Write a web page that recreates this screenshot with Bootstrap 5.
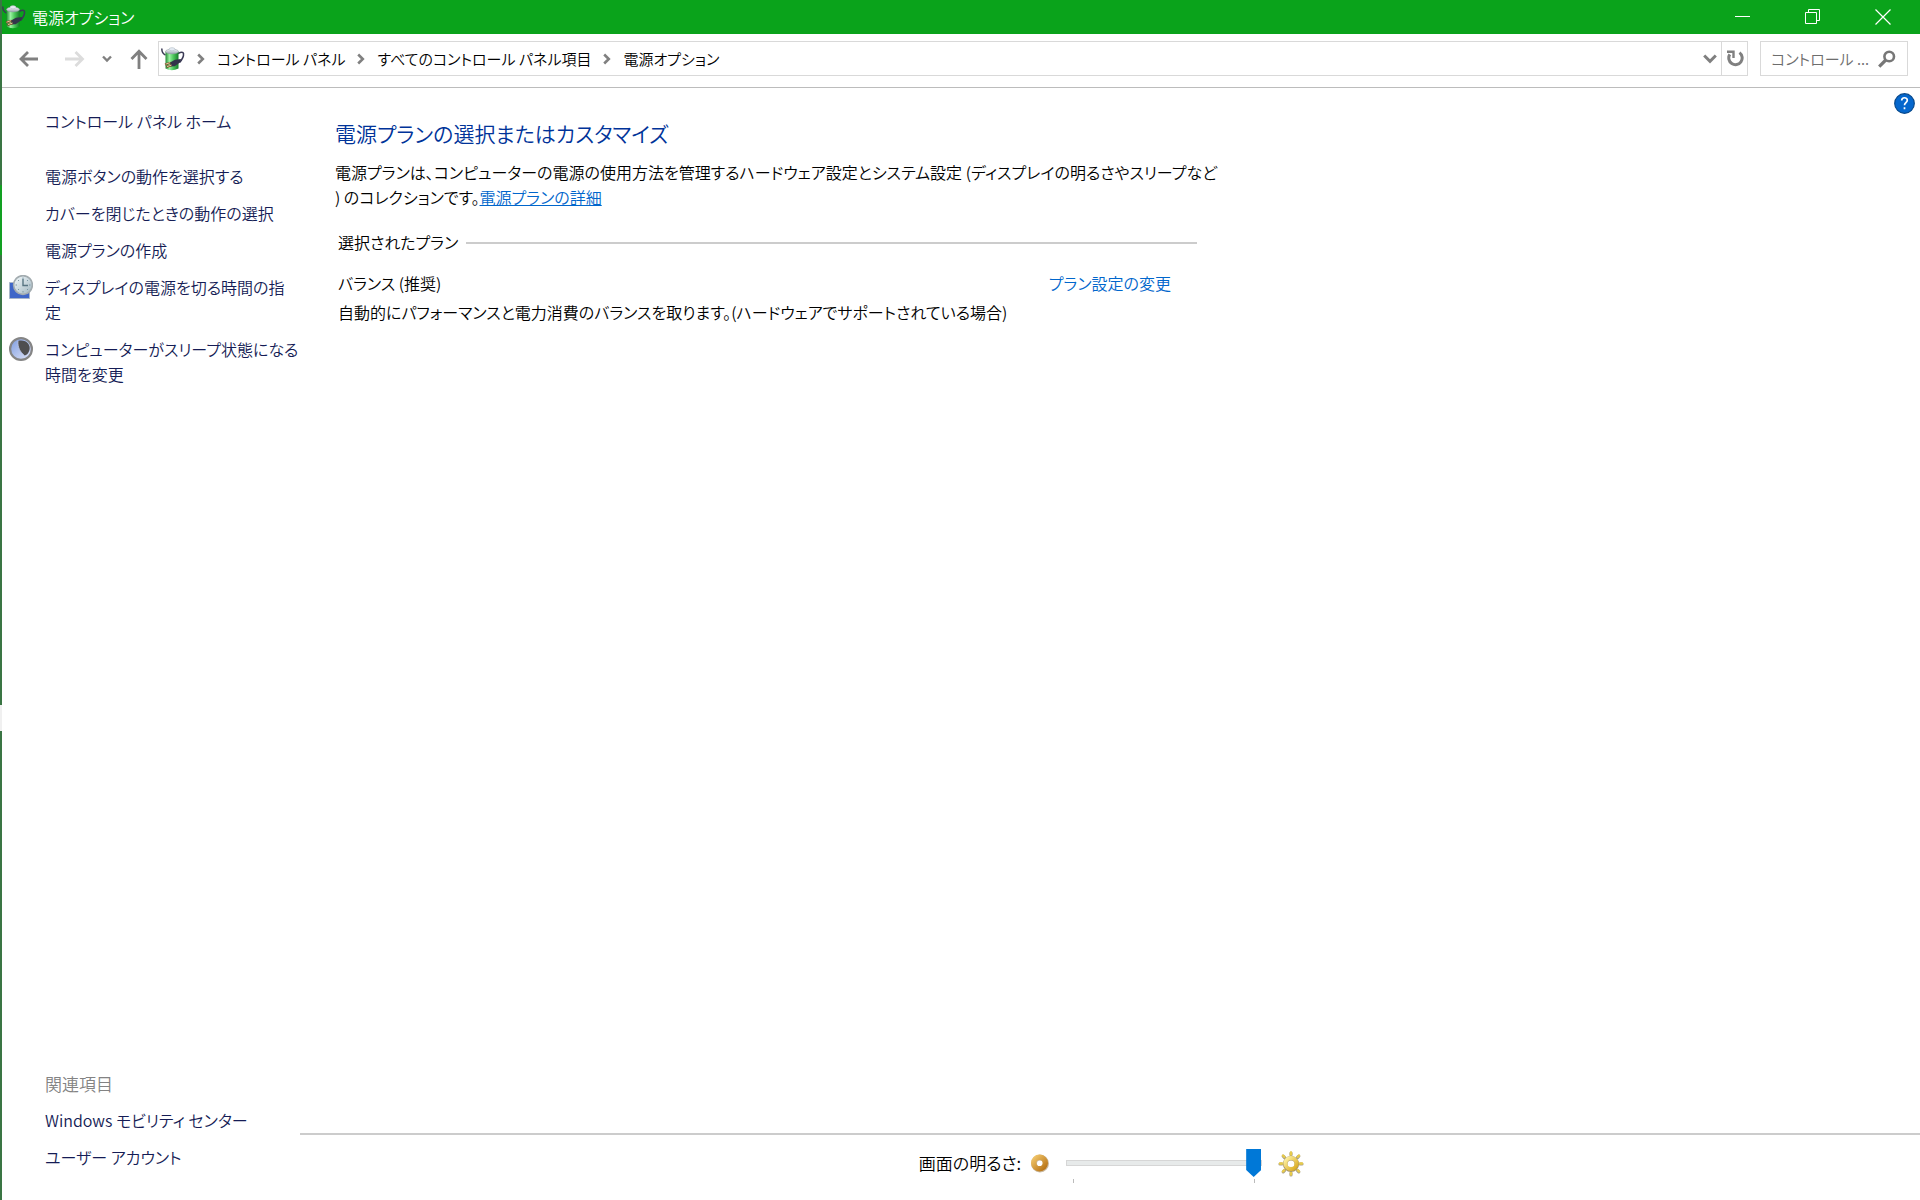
<!DOCTYPE html>
<html lang="ja">
<head>
<meta charset="utf-8">
<meta name="viewport" content="width=device-width, initial-scale=1">
<title>電源オプション</title>
<link href="https://cdn.jsdelivr.net/npm/bootstrap@5.3.0/dist/css/bootstrap.min.css" rel="stylesheet">
<style>
  body { font-family: "Noto Sans CJK JP", sans-serif; font-feature-settings: "palt"; font-weight: 350; font-size: 16px; line-height: 25px; color: #000; background: #fff; }
  a { text-decoration: none; color: #0066cc; }
  button { background: none; border: 0; padding: 0; color: inherit; }
  svg { display: block; flex: none; }
  .desk { width: 2px; background: #3a7544; }
  .desk-top { height: 185px; }
  .desk-lit { height: 70px; background: #12a022; }
  .desk-mid { height: 450px; }
  .desk-gap { height: 26px; background: #f0f0f0; }
  .titlebar { height: 34px; background: #0aa31b; color: #fff; padding-right: 2px; }
  .titlebar button { width: 70px; height: 34px; }
  .app-name { margin-left: 6px; }
  .navbar-strip { height: 54px; padding: 7px 12px 11px 0; border-bottom: 1px solid #bcbcbc; color: #808080; font-size: 15px; }
  .nav-keys { width: 156px; padding: 0 10px 0 17px; }
  .address { border: 1px solid #d9d9d9; height: 35px; color: #000; padding-left: 2px; }
  .address a { color: #000; }
  .crumb-sep { margin: 0 12px; }
  .refresh { width: 26px; height: 33px; border-left: 1px solid #d9d9d9; }
  .search { width: 148px; height: 35px; border: 1px solid #d9d9d9; margin-left: 12px; padding: 0 11px 0 10px; }
  .search input { border: 0; outline: 0; width: 100px; padding: 0; background: none; color: #6d6d6d; font-weight: 350; font-feature-settings: "palt"; }
  .search input::placeholder { color: #6d6d6d; opacity: 1; }
  .side { width: 298px; padding: 21px 0 30px 7px; }
  .side a { color: #151c55; }
  .side li { display: flex; gap: 12px; padding-left: 36px; }
  .side li.pictured { padding-left: 0; }
  .tasks { display: flex; flex-direction: column; gap: 12px; }
  .main-tasks { margin-top: 30px; }
  .side .related { color: #838383; font-size: 17px; }
  .plans { padding: 28px 0 0 35px; width: 920px; }
  .plans h1 { font-size: 21px; line-height: 34px; font-weight: 350; color: #003399; margin-bottom: 10px; }
  .rule { height: 2px; background: #ccc; }
  .group { padding-left: 3px; width: 862px; }
  .group h2 { font-size: 16px; line-height: 25px; font-weight: 350; margin: 0; }
  .change { margin-right: 26px; }
  .bright { padding: 14px 0 17px 3px; gap: 10px; line-height: 28px; font-size: 17px; }
  .level { width: 196px; margin: 0 6px 0 7px; }
  .level input { appearance: none; -webkit-appearance: none; width: 100%; height: 28px; margin: 0; display: block; background: none; }
  .level input::-webkit-slider-runnable-track { height: 6px; background: #e7eaea; border: 1px solid #d6d6d6; }
  .level input::-webkit-slider-thumb { -webkit-appearance: none; width: 15px; height: 28px; margin-top: -12px; background: #0078d7; clip-path: polygon(0 0, 100% 0, 100% 75%, 50% 100%, 0 75%); }
  .ticks { padding: 2px 7px 0; }
  .ticks span { width: 1px; height: 4px; background: #bbb; }
  .help { margin: 5px 5px 0 auto; height: 21px; }
</style>
<script src="https://cdn.jsdelivr.net/npm/bootstrap@5.3.0/dist/js/bootstrap.bundle.min.js"></script>
</head>
<body>
<svg width="0" height="0" class="position-absolute" aria-hidden="true">
  <defs>
    <linearGradient id="cell"><stop offset="0" stop-color="#238a35"/><stop offset=".3" stop-color="#9af2a2"/><stop offset=".6" stop-color="#4fc95c"/><stop offset="1" stop-color="#177c29"/></linearGradient>
    <linearGradient id="cap" x2="0" y2="1"><stop offset="0" stop-color="#f5f7fa"/><stop offset="1" stop-color="#98a3ad"/></linearGradient>
    <linearGradient id="steel" x2="1" y2="1"><stop offset="0" stop-color="#f6fbfd"/><stop offset="1" stop-color="#9fb5bf"/></linearGradient>
    <linearGradient id="gold" x2="1" y2="1"><stop offset="0" stop-color="#f0c468"/><stop offset="1" stop-color="#b87316"/></linearGradient>
    <linearGradient id="sun" x2="1" y2="1"><stop offset="0" stop-color="#fff3a6"/><stop offset="1" stop-color="#d8a81c"/></linearGradient>
    <linearGradient id="night" x2="1" y2="1"><stop offset="0" stop-color="#7c9be0"/><stop offset="1" stop-color="#e2e6f8"/></linearGradient>
    <symbol id="battery" viewBox="0 0 24 24">
      <path d="M.8 1.500q0 5 3.700 6.500M17 6.500q5-2.500 5.500 0 .5 4-4 9" fill="none" stroke="#3b3a56" stroke-width="1.500"/>
      <path d="M4.500 4.500v17q6 3.500 13 0v-17z" fill="url(#cell)"/>
      <ellipse cx="11" cy="4.500" rx="6.500" ry="2.400" fill="url(#cap)" stroke="#8f999f" stroke-width=".5"/>
      <ellipse cx="11" cy="2.200" rx="3" ry="1.600" fill="#e3eaf2" stroke="#a0abb5" stroke-width=".4"/>
      <path d="M9 15.500l5-2.800 6-.7-.8 3.200-5.500 4-4 .3z" fill="#33344a"/>
      <path d="M4 17.500l5.500-1.800M5.500 20l5-1.800" stroke="#6d4a22" stroke-width="2"/>
      <path d="M4.500 17.200l4.500-1.500M6 19.600l4.500-1.500" stroke="#e6c69a" stroke-width="1"/>
    </symbol>
    <symbol id="crumb" viewBox="0 0 8 12"><path d="M1.200 1.500L5.800 6l-4.600 4.500" fill="none" stroke="#808080" stroke-width="2.600"/></symbol>
  </defs>
</svg>
<div class="d-flex min-vh-100">
  <div class="desk" aria-hidden="true">
    <div class="desk-top"></div><div class="desk-lit"></div><div class="desk-mid"></div><div class="desk-gap"></div>
  </div>
  <div class="d-flex flex-column flex-grow-1">
    <header class="titlebar d-flex align-items-center">
      <svg width="24" height="24"><use href="#battery"/></svg>
      <span class="app-name flex-grow-1">電源オプション</span>
      <button type="button" aria-label="最小化"><svg class="mx-auto" width="16" height="16"><path d="M0 7.500h15" stroke="#fff"/></svg></button>
      <button type="button" aria-label="元に戻す"><svg class="mx-auto" width="16" height="16" fill="none" stroke="#fff"><path d="M.5 3.500h11v11H.5zM3.500 3.500v-3h11v11h-3"/></svg></button>
      <button type="button" aria-label="閉じる"><svg class="mx-auto" width="16" height="16"><path d="M.5.5l15 15M15.500.5l-15 15" stroke="#fff" stroke-width="1.200"/></svg></button>
    </header>
    <nav class="navbar-strip d-flex align-items-center" aria-label="アドレス">
      <div class="nav-keys d-flex align-items-center justify-content-between">
        <button type="button" aria-label="戻る"><svg width="20" height="16" fill="none" stroke="#808080" stroke-width="2.800"><path d="M19 8H2M9 1L2 8l7 7"/></svg></button>
        <button type="button" aria-label="進む" class="ms-2"><svg width="20" height="16" fill="none" stroke="#dcdcdc" stroke-width="2.800"><path d="M0 8h18M10.500 1l7 7-7 7"/></svg></button>
        <button type="button" aria-label="最近の場所"><svg width="10" height="8" fill="none" stroke="#808080" stroke-width="2.400"><path d="M1 1.500l4 4 4-4"/></svg></button>
        <button type="button" aria-label="上へ"><svg width="18" height="20" fill="none" stroke="#808080" stroke-width="2.800"><path d="M9 20V2M1.500 10L9 2.200l7.500 7.800"/></svg></button>
      </div>
      <div class="address d-flex align-items-center flex-grow-1">
        <svg width="24" height="24"><use href="#battery"/></svg>
        <svg class="crumb-sep" width="8" height="12"><use href="#crumb"/></svg>
        <a href="#">コントロール パネル</a>
        <svg class="crumb-sep" width="8" height="12"><use href="#crumb"/></svg>
        <a href="#">すべてのコントロール パネル項目</a>
        <svg class="crumb-sep" width="8" height="12"><use href="#crumb"/></svg>
        <a href="#">電源オプション</a>
        <button type="button" class="ms-auto me-1" aria-label="以前の場所"><svg width="14" height="10" fill="none" stroke="#808080" stroke-width="3"><path d="M1.200 1.500L7 7.300l5.800-5.800"/></svg></button>
        <button type="button" class="refresh" aria-label="最新の情報に更新"><svg class="mx-auto" width="18" height="18" fill="none" stroke="#808080"><path d="M13.500 2.600A6.700 6.700 0 1 1 3.800 4.400" stroke-width="3"/><path d="M1 1.800h6.500V8" stroke-width="2.400"/></svg></button>
      </div>
      <div class="search d-flex align-items-center justify-content-between">
        <input type="text" placeholder="コントロール ..." aria-label="コントロール パネルの検索">
        <svg width="18" height="18" fill="none" stroke="#777"><circle cx="11.200" cy="6.500" r="4.800" stroke-width="2.600"/><path d="M7.800 10L1.200 16.600" stroke-width="3.200"/></svg>
      </div>
    </nav>
    <div class="d-flex flex-grow-1">
      <aside class="side d-flex flex-column">
        <ul class="list-unstyled mb-0"><li><a href="#">コントロール パネル ホーム</a></li></ul>
        <ul class="list-unstyled tasks main-tasks mb-auto">
          <li><a href="#">電源ボタンの動作を選択する</a></li>
          <li><a href="#">カバーを閉じたときの動作の選択</a></li>
          <li><a href="#">電源プランの作成</a></li>
          <li class="pictured">
            <svg width="24" height="24"><path d="M.5 7.500h20v16H.5z" fill="#3f66c8" stroke="#a9b6c9"/><circle cx="14" cy="10" r="9.400" fill="url(#steel)" stroke="#a3acb0" stroke-width="1.600"/><path d="M14 4v6.500h5" fill="none" stroke="#587582" stroke-width="1.400"/><path d="M14 2.500v1.500M14 16v1.500M6.500 10H8M20 10h1.500M9 5l1 1M9 15l1-1M19 15l-1-1M19 5l-1 1" stroke="#7c97a4"/></svg>
            <a href="#">ディスプレイの電源を切る時間の指<br>定</a></li>
          <li class="pictured">
            <svg width="24" height="24"><circle cx="12" cy="12" r="10.900" fill="url(#night)" stroke="#858585" stroke-width="2.200"/><path d="M9 4c8-2 13 4 11.500 9-1 3.500-3 5-5 5.500C11 15 8.500 10 9 4z" fill="#4e4e50"/><path d="M9 4c-.5 6 2 11 6.500 14.500" fill="none" stroke="#b9c3e2" stroke-width=".8"/></svg>
            <a href="#">コンピューターがスリープ状態になる<br>時間を変更</a></li>
        </ul>
        <ul class="list-unstyled tasks mb-0">
          <li class="related">関連項目</li>
          <li><a href="#">Windows モビリティ センター</a></li>
          <li><a href="#">ユーザー アカウント</a></li>
        </ul>
      </aside>
      <div class="d-flex flex-column flex-grow-1">
        <div class="d-flex flex-grow-1">
          <main class="plans">
            <h1>電源プランの選択またはカスタマイズ</h1>
            <p class="mb-0">電源プランは、コンピューターの電源の使用方法を管理するハードウェア設定とシステム設定 (ディスプレイの明るさやスリープなど<br>) のコレクションです。<a href="#" class="text-decoration-underline">電源プランの詳細</a></p>
            <section class="group mt-3 pt-1">
              <div class="d-flex align-items-center gap-2"><h2>選択されたプラン</h2><div class="rule flex-grow-1"></div></div>
              <div class="d-flex justify-content-between mt-3"><span>バランス (推奨)</span><a href="#" class="change">プラン設定の変更</a></div>
              <p class="mb-0 mt-1">自動的にパフォーマンスと電力消費のバランスを取ります。(ハードウェアでサポートされている場合)</p>
            </section>
          </main>
          <button type="button" class="help" aria-label="ヘルプ"><svg width="21" height="21"><circle cx="10.500" cy="10.500" r="9.800" fill="#0567cd" stroke="#0a4a8c" stroke-width="1.200"/><path d="M7.700 7.500C7.700 3.800 13.300 4 13.300 7.200c0 2.300-2.800 2.500-2.800 5M10.500 14.200v2" fill="none" stroke="#fff" stroke-width="1.700"/></svg></button>
        </div>
        <div class="rule"></div>
        <footer class="bright d-flex justify-content-center">
          <label for="level">画面の明るさ:</label>
          <svg width="18" height="28"><circle cx="9" cy="14.500" r="6" fill="none" stroke="#c9b9a0" stroke-width="6"/><circle cx="8.500" cy="14" r="5.800" fill="none" stroke="url(#gold)" stroke-width="5.400"/></svg>
          <div class="level">
            <input type="range" id="level" min="0" max="100" value="100">
            <div class="ticks d-flex justify-content-between"><span></span><span></span></div>
          </div>
          <svg width="26" height="28"><g fill="none" stroke-linecap="round"><path d="M13 4v2M13 24v2M2 15h2M22 15h2M5.200 7.200l1.300 1.300M20.800 7.200l-1.300 1.300M5.200 22.800l1.300-1.300M20.800 22.800l-1.300-1.300" stroke="#a8a08a" stroke-width="3.200"/><path d="M13 3.500v2M13 23.500v2M2 14.500h2M22 14.500h2M5 6.500l1.300 1.300M21 6.500l-1.300 1.300M5 22.500l1.300-1.300M21 22.500l-1.300-1.300" stroke="#e8cb4a" stroke-width="2.400"/></g><circle cx="13" cy="15" r="5.800" fill="none" stroke="#a89668" stroke-width="4.600"/><circle cx="13" cy="14.500" r="5.600" fill="none" stroke="url(#sun)" stroke-width="4"/></svg>
        </footer>
      </div>
    </div>
  </div>
</div>
</body>
</html>
